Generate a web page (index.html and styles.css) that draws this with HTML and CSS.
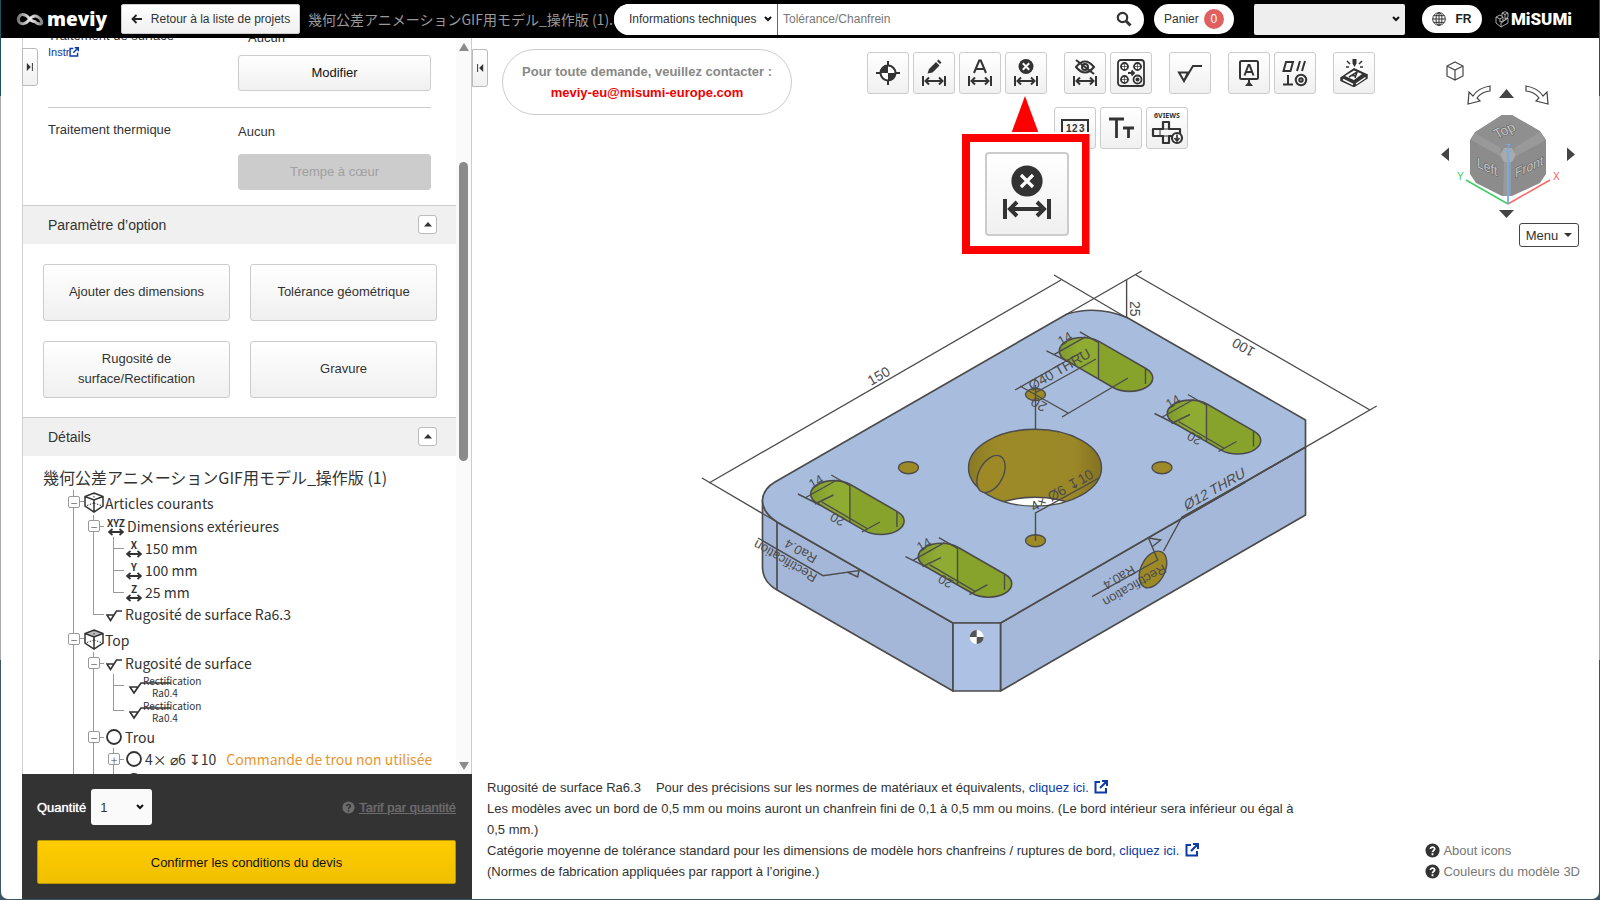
FILE: index.html
```html
<!DOCTYPE html>
<html lang="fr">
<head>
<meta charset="utf-8">
<title>meviy</title>
<link rel="stylesheet" href="styles.css">
</head>
<body>
<svg class="defs" aria-hidden="true">
  <defs>
    <linearGradient id="gGreen" x1="0" x2="1" y1="0" y2="0"><stop offset="0" stop-color="#7f9a2c"/><stop offset=".2" stop-color="#8fab33"/><stop offset=".42" stop-color="#8fab30"/><stop offset=".43" stop-color="#87a32c"/><stop offset="1" stop-color="#87a32c"/></linearGradient>
    <linearGradient id="gGold" x1="0" x2="1" y1="0" y2="0"><stop offset="0" stop-color="#8a7a26"/><stop offset=".2" stop-color="#9d8a27"/><stop offset=".8" stop-color="#9a8727"/><stop offset="1" stop-color="#847123"/></linearGradient>
    <linearGradient id="gLogo" x1="0" x2="1"><stop offset="0" stop-color="#777"/><stop offset=".5" stop-color="#eee"/><stop offset="1" stop-color="#888"/></linearGradient>
    <symbol id="slot" viewBox="-45 -30 120 80" overflow="visible">
      <path class="green" d="M16.4-9.5 63.4 17.6A23.2 13.4 0 0 1 30.6 36.6L-16.4 9.5A23.2 13.4 0 0 1 16.4-9.5Z"/>
      <path class="ln" d="M16-9.5V28M63 17.5V33M-2.6-19 16.4-8M-36 0-14 11M-29 4 3-14"/>
    </symbol>
    <symbol id="slotlen" viewBox="-45 -30 120 80" overflow="visible">
      <path class="ln" d="M-19 10-.5 1M-12 8 34 35M28 38 46 28"/>
    </symbol>
    <symbol id="arrows" viewBox="0 0 24 10"><path d="M1 0V10M23 0V10M3 5H21M7 1.500 3.500 5 7 8.500M17 1.500 20.500 5 17 8.500" fill="none" stroke="#333" stroke-width="2"/></symbol>
    <symbol id="ext" viewBox="0 0 14 14"><path d="M6 2H1.500V12.500H12V8M8 1H13V6M13 1 6 8" fill="none" stroke="currentColor" stroke-width="2"/></symbol>
    <symbol id="dbl" viewBox="0 0 16 8"><path d="M1 4H15M4.500 1 1 4 4.500 7M11.500 1 15 4 11.500 7" fill="none" stroke="#333" stroke-width="1.800"/></symbol>
    <symbol id="rough" viewBox="0 0 16 12"><path d="M1 5H8L4.500 10.500ZM4.500 10.500 10.500 1H16" fill="none" stroke="#333" stroke-width="1.600"/></symbol>
    <symbol id="help" viewBox="0 0 16 16"><circle cx="8" cy="8" r="7.500" fill="currentColor"/><path d="M5.800 6.500C5.800 3.600 10.400 3.800 10.300 6.400 10.200 8 8 7.900 8 9.800M8 11V13" fill="none" stroke="var(--q)" stroke-width="1.900"/></symbol>
    <symbol id="cube" viewBox="0 0 20 21"><path d="M10 1 19 4.500V14L10 20 1 14V4.500ZM1 4.500 10 8 19 4.500M10 8V20" fill="none" stroke="#333" stroke-width="1.500"/><path d="M10 1V11M10 11 1.500 14M10 11 18.500 14" fill="none" stroke="#333" stroke-width="1" stroke-dasharray="1.500 1.500"/></symbol>
    <symbol id="ring" viewBox="0 0 16 16"><circle cx="8" cy="8" r="7" fill="none" stroke="#333" stroke-width="1.800"/></symbol>
  </defs>
</svg>
<div class="window">
  <header class="topbar">
    <div class="logo">
      <svg width="29" height="18" viewBox="0 0 29 18"><path d="M20 11C15 14 13 6 9 5 4 3 1 8 3 12 5 15 10 14 13 10 16 6 19 5 22 7 26 9 27 14 24 14 22 14 20 13 18 11" fill="none" stroke="url(#gLogo)" stroke-width="3"/></svg>
      <span>meviy</span>
    </div>
    <button class="back" type="button"><svg width="11" height="10" viewBox="0 0 11 10"><path d="M11 5H1.500M5.500 1 1.500 5 5.500 9" fill="none" stroke="#222" stroke-width="1.800"/></svg>Retour à la liste de projets</button>
    <div class="fname">幾何公差アニメーションGIF用モデル_操作版 (1).</div>
    <form class="search">
      <select aria-label="Catégorie"><option>Informations techniques</option></select>
      <input type="text" aria-label="Recherche" placeholder="Tolérance/Chanfrein">
      <button type="button" aria-label="Rechercher"><svg width="16" height="16" viewBox="0 0 16 16"><circle cx="6.500" cy="6.500" r="4.700" fill="none" stroke="#333" stroke-width="2.200"/><path d="M10 10 14.500 14.500" stroke="#333" stroke-width="3"/></svg></button>
    </form>
    <button class="cart" type="button">Panier <b>0</b></button>
    <select class="account" aria-label="Compte"><option></option></select>
    <button class="lang" type="button"><svg width="14" height="14" viewBox="0 0 14 14"><g fill="none" stroke="#333"><circle cx="7" cy="7" r="6.300"/><ellipse cx="7" cy="7" rx="3" ry="6.300"/><path d="M7 .7V13.300M.7 7H13.300M1.700 3.700H12.300M1.700 10.300H12.300"/></g></svg>FR</button>
    <div class="misumi"><svg width="14" height="17" viewBox="0 0 14 17"><path d="M1 6 5 4 8 6V10L13 7V12L6 16 1 12ZM1 6 5 8 8 6M5 8V11L8 10M6 16V12L13 7M7 5V2L10 .7 13 2V6L10 8M7 2 10 3.500 13 2M10 3.500V8" fill="none" stroke="#bbb" stroke-width=".9"/></svg><span>MiSUMi</span></div>
  </header>
  <div class="work">
    <aside class="side">
      <button class="tab tab-left" type="button" aria-label="Déplier"><svg width="8" height="8" viewBox="0 0 8 10"><path d="M0 0 5 5 0 10Z" fill="#333"/><path d="M7 0V10" stroke="#333" stroke-width="1.200"/></svg></button>
      <div class="scroller">
        <div class="content">
          <section class="prop first">
            <div><div class="lab">Traitement de surface</div><a class="instr" href="#">Instr<svg width="10" height="10"><use href="#ext"/></svg></a></div>
            <div><div class="val indent">Aucun</div><button class="btn" type="button">Modifier</button></div>
          </section>
          <section class="prop">
            <div class="lab">Traitement thermique</div>
            <div><div class="val">Aucun</div><button class="btn off" type="button" disabled>Trempe à cœur</button></div>
          </section>
          <h2 class="head">Paramètre d’option<button type="button" aria-label="Replier"><svg width="8" height="5"><path d="M0 4.500 4 0 8 4.500Z" fill="#333"/></svg></button></h2>
          <div class="opts">
            <button class="btn" type="button">Ajouter des dimensions</button>
            <button class="btn" type="button">Tolérance géométrique</button>
            <button class="btn" type="button">Rugosité de surface/Rectification</button>
            <button class="btn" type="button">Gravure</button>
          </div>
          <h2 class="head">Détails<button type="button" aria-label="Replier"><svg width="8" height="5"><path d="M0 4.500 4 0 8 4.500Z" fill="#333"/></svg></button></h2>
          <div class="details">
            <div class="model">幾何公差アニメーションGIF用モデル_操作版 (1)</div>
            <ul class="tree">
              <li>
                <div class="row r1"><button class="tg" type="button">−</button><svg class="c" width="20" height="21"><use href="#cube"/></svg>Articles courants</div>
                <ul>
                  <li>
                    <div class="row"><button class="tg" type="button">−</button><span class="ax wide">XYZ<svg width="16" height="8"><use href="#dbl"/></svg></span>Dimensions extérieures</div>
                    <ul>
                      <li><div class="row"><span class="ax">X<svg width="16" height="8"><use href="#dbl"/></svg></span>150 mm</div></li>
                      <li><div class="row"><span class="ax">Y<svg width="16" height="8"><use href="#dbl"/></svg></span>100 mm</div></li>
                      <li><div class="row"><span class="ax">Z<svg width="16" height="8"><use href="#dbl"/></svg></span>25 mm</div></li>
                    </ul>
                  </li>
                  <li><div class="row"><svg class="i low" width="16" height="12"><use href="#rough"/></svg>Rugosité de surface Ra6.3</div></li>
                </ul>
              </li>
              <li class="gap">
                <div class="row r1"><button class="tg" type="button">−</button><svg class="c" width="20" height="21"><path d="M10 1 19 4.500 10 8 1 4.500Z" fill="#bbb"/><use href="#cube"/></svg>Top</div>
                <ul>
                  <li>
                    <div class="row"><button class="tg" type="button">−</button><svg class="i low" width="16" height="12"><use href="#rough"/></svg>Rugosité de surface</div>
                    <ul class="recs">
                      <li><div class="row rec"><svg width="42" height="14" viewBox="0 0 42 14"><path d="M1 6H9L5 12ZM5 12 12 2H42" fill="none" stroke="#333" stroke-width="1.600"/></svg><span>Rectification<br><i>Ra0.4</i></span></div></li>
                      <li><div class="row rec"><svg width="42" height="14" viewBox="0 0 42 14"><path d="M1 6H9L5 12ZM5 12 12 2H42" fill="none" stroke="#333" stroke-width="1.600"/></svg><span>Rectification<br><i>Ra0.4</i></span></div></li>
                    </ul>
                  </li>
                  <li>
                    <div class="row"><button class="tg" type="button">−</button><svg class="i" width="16" height="16"><use href="#ring"/></svg>Trou</div>
                    <ul>
                      <li><div class="row"><button class="tg" type="button">+</button><svg class="i" width="16" height="16"><use href="#ring"/></svg>4× ⌀6 ↧10<em>Commande de trou non utilisée</em></div></li>
                      <li><div class="row"><button class="tg" type="button">+</button><svg class="i" width="16" height="16"><use href="#ring"/></svg></div></li>
                    </ul>
                  </li>
                  <li><div class="row"></div></li>
                </ul>
              </li>
              <li><div class="row"></div></li>
            </ul>
          </div>
        </div>
        <div class="bar"><svg width="10" height="8"><path d="M0 8 5 0 10 8Z" fill="#8b8b8b"/></svg><div class="track"><div class="thumb"></div></div><svg width="10" height="8"><path d="M0 0 5 8 10 0Z" fill="#8b8b8b"/></svg></div>
      </div>
      <div class="foot">
        <div class="qty"><label for="q">Quantité</label><select id="q"><option>1</option></select><a class="tarif" href="#"><svg width="13" height="13"><use href="#help"/></svg><span>Tarif par quantité</span></a></div>
        <button class="confirm" type="button">Confirmer les conditions du devis</button>
      </div>
    </aside>
    <main class="view">
      <div class="upper">
        <button class="tab tab-right" type="button" aria-label="Replier"><svg width="8" height="8" viewBox="0 0 8 10"><path d="M8 0 3 5 8 10Z" fill="#333"/><path d="M1 0V10" stroke="#333" stroke-width="1.200"/></svg></button>
        <div class="contact">Pour toute demande, veuillez contacter :<br><a href="#">meviy-eu@misumi-europe.com</a></div>
        <div class="tools">
          <div class="grp">
            <button type="button" aria-label="Origine"><svg width="28" height="28" viewBox="0 0 28 28"><path d="M14 2V26M2 14H26" stroke="#333" stroke-width="2"/><circle cx="14" cy="14" r="7.500" fill="#fff" stroke="#333" stroke-width="2"/><path d="M14 14V6A8 8 0 0 0 6 14ZM14 14V22A8 8 0 0 0 22 14Z" fill="#333"/></svg></button>
            <button type="button" aria-label="Modifier cote"><svg width="28" height="28" viewBox="0 0 28 28"><path d="M7.500 14.500 9 10 16 3 19.500 6.500 12.500 13.500ZM17 2 18.500.5 21.500 3.500 20 5Z" fill="#333"/><use href="#arrows" x="2" y="17" width="24" height="10"/></svg></button>
            <button type="button" aria-label="Texte cote"><svg width="28" height="28" viewBox="0 0 28 28"><path d="M8 14 13.200 1.500H14.800L20 14M10 10H18" fill="none" stroke="#333" stroke-width="2"/><use href="#arrows" x="2" y="17" width="24" height="10"/></svg></button>
            <div class="marked">
              <button type="button" aria-label="Supprimer cote"><svg width="28" height="28" viewBox="0 0 28 28"><circle cx="14" cy="7.500" r="7.500" fill="#333"/><path d="M10.800 4.300 17.200 10.700M17.200 4.300 10.800 10.700" stroke="#fff" stroke-width="2"/><use href="#arrows" x="2" y="17" width="24" height="10"/></svg></button>
              <div class="callout">
                <svg class="point" width="28" height="38" viewBox="0 0 28 38"><path d="M14 0 28 38H0Z" fill="#f00"/></svg>
                <div class="frame"><span class="big"><svg width="56" height="60" viewBox="0 0 28 30"><circle cx="14" cy="8.500" r="7.800" fill="#333"/><path d="M11 5.500 17 11.500M17 5.500 11 11.500" stroke="#fff" stroke-width="1.600"/><use href="#arrows" x="2" y="17.500" width="24" height="10"/></svg></span></div>
              </div>
            </div>
          </div>
          <div class="grp">
            <button type="button" aria-label="Masquer cote"><svg width="28" height="28" viewBox="0 0 28 28"><g fill="none" stroke="#333" stroke-width="2"><path d="M5 8Q14-3 23 8 14 19 5 8Z"/><circle cx="14" cy="8" r="3"/><path d="M5 1 23 15"/></g><use href="#arrows" x="2" y="17" width="24" height="10"/></svg></button>
            <button type="button" aria-label="Trous"><svg width="28" height="28" viewBox="0 0 28 28"><g fill="none" stroke="#333" stroke-width="1.800"><rect x="1" y="1" width="26" height="26" rx="3"/><circle cx="7.500" cy="7.500" r="3.500"/><circle cx="20.500" cy="7.500" r="3.500"/><circle cx="7.500" cy="20.500" r="3.500"/><circle cx="20.500" cy="20.500" r="4"/><path d="M11 14H17M14.500 11.500 17 14 14.500 16.500"/><path d="M3 7.500H12M16 7.500H25M3 20.500H12M7.500 3V12M20.500 3V12M7.500 16V25" stroke-width=".7"/></g><circle cx="20.500" cy="20.500" r="2" fill="#333"/></svg></button>
          </div>
          <div class="grp">
            <button type="button" aria-label="Rugosité"><svg width="28" height="28" viewBox="0 0 28 28"><path d="M3 13.500H12L8 22ZM8 22 17 7H26" fill="none" stroke="#333" stroke-width="2"/></svg></button>
          </div>
          <div class="grp">
            <button type="button" aria-label="Référence"><svg width="28" height="28" viewBox="0 0 28 28"><g fill="none" stroke="#333" stroke-width="2"><rect x="5" y="2" width="18" height="18" rx="1.500"/><path d="M9.500 16.500 13.500 6H14.500L18.500 16.500M11 13H17M14 20V26" /></g><path d="M14 22 18 27H10Z" fill="#333"/></svg></button>
            <button type="button" aria-label="Tolérance géométrique"><svg width="28" height="28" viewBox="0 0 28 28"><g fill="none" stroke="#333" stroke-width="2"><path d="M5 3H12L9.500 12H2.500ZM16 12 19 2M21 12 24 2M7 16V25.500M2 25.500H12"/><circle cx="20" cy="21" r="5.200"/><circle cx="20" cy="21" r="1.700"/></g></svg></button>
          </div>
          <div class="grp">
            <button type="button" aria-label="Gravure"><svg width="28" height="28" viewBox="0 0 28 28"><path d="M12.500 0H16.500V4.500L14.500 8 12.500 4.500ZM1 18 14 9 27 15 14 25Z" fill="#333"/><path d="M1 18V21.500L14 27.500 27 19V15" fill="#333" stroke="#333" stroke-width="1.500"/><path d="M5 17 14 11.500 22 15 14 21Z" fill="#fff"/><path d="M3 20.500 13 25.500M16 25 25.500 18.500" stroke="#fff" stroke-width="1.500"/><path d="M9 18 17 13 15 19M12 16.500 16 17" fill="none" stroke="#333" stroke-width="1.600"/><path d="M7 2 10 5M22 2 19 5M6 8H9M20 8H23" stroke="#333" stroke-width="1.500"/></svg></button>
          </div>
          <div class="grp">
            <button type="button" aria-label="Valeurs"><svg width="28" height="28" viewBox="0 0 28 28"><rect x="1" y="6" width="26" height="18" fill="none" stroke="#333" stroke-width="2"/><text x="5" y="18" class="ic123">1</text><text x="11" y="18" class="ic123">2</text><text x="18" y="18" class="ic123">3</text></svg></button>
            <button type="button" aria-label="Taille du texte"><svg width="28" height="28" viewBox="0 0 28 28"><path d="M2 5H17M9.500 5V24M16 14H27M21.500 14V24" fill="none" stroke="#333" stroke-width="2.800"/></svg></button>
            <button type="button" aria-label="6 vues"><svg width="34" height="36" viewBox="0 0 34 36"><text x="17" y="8" class="ic6">6VIEWS</text><g fill="none" stroke="#333" stroke-width="2.200"><path d="M13 12H19V19H30V26H19V33H13V26H3V19H13Z" stroke-linejoin="round"/><path d="M10 19V26M13 19H19M13 26H19" stroke-width="1"/><circle cx="27" cy="28" r="5" fill="#fff"/></g><path d="M27 24.500V30M24.500 28 27 31 29.500 28" fill="none" stroke="#333" stroke-width="1.700"/></svg></button>
          </div>
        </div>
        <div class="nav">
          <svg width="150" height="164" viewBox="1438 58 150 164">
            <g fill="none" stroke="#444" stroke-width="1.200"><path d="M1455 62 1463 66V76L1455 80 1447 76V66ZM1447 66 1455 70 1463 66M1455 70V80"/>
            <path d="M1490 86Q1478 88 1473 96L1469 92 1468 104 1480 101 1477 98Q1481 92 1490 91ZM1526 86Q1538 88 1543 96L1547 92 1548 104 1536 101 1539 98Q1535 92 1526 91Z"/></g>
            <path d="M1499 98 1506.500 89 1514 98ZM1499 210 1506.500 218 1514 210ZM1449 147.500 1441 154.500 1449 161ZM1567 147.500 1575 154.500 1567 161Z" fill="#444"/>
            <path d="M1502 115H1512L1540 131 1546 140V174L1540 183 1512 196H1502L1476 183 1470 174V140L1475 132Z" fill="#8c8c8c"/>
            <path d="M1502 115H1512L1540 132 1514 148H1501L1475 133Z" fill="#8f8f8f"/>
            <path d="M1475 133 1501 148 1500 156 1471 140ZM1540 132 1546 140 1516 156 1514 148ZM1504 162H1511V196H1503Z" fill="#999"/>
            <path d="M1504 148H1512L1516 155 1512 162H1504L1500 155Z" fill="#a9a9a9"/>
            <g class="face"><text transform="matrix(.87 -.4 .5 .87 1497 139)">Top</text><text transform="matrix(.87 .4 0 1 1477 167)">Left</text><text transform="matrix(.87 -.4 0 1 1515 178)">Front</text></g>
            <path d="M1508 204 1466 180" stroke="#45cc66" stroke-width="1.500"/><path d="M1508 204 1550 180" stroke="#f66" stroke-width="1.500"/><path d="M1508 204V152" stroke="#6faeee" stroke-width="1.800"/>
            <text class="axis" x="1457" y="180" fill="#3c6">Y</text><text class="axis" x="1553" y="180" fill="#f55">X</text><text class="axis" x="1505" y="152" fill="#6faeee">Z</text>
          </svg>
          <button class="menu" type="button">Menu<svg width="8" height="4"><path d="M0 0H8L4 4Z" fill="#333"/></svg></button>
        </div>
      </div>
      <svg class="part" viewBox="472 262 1127 446" preserveAspectRatio="xMidYMin meet" role="img" aria-label="Modèle 3D">
        <g stroke="#4c4c4c" stroke-width="1.700" stroke-linejoin="round">
          <path fill="#a5b7d8" d="M762.500 500V568Q763 582 777 590L953 691V623L777 522Z"/>
          <path fill="#a5b8da" d="M1000.500 623V691L1305.500 515V447Z"/>
          <path fill="#a8bddd" d="M1305.500 420V447L1000.500 623H953L777 522Q762 512 762.500 500 763 489 775 482L1067 314Q1096 305 1127 317.500Z"/>
          <path fill="#adc1e4" d="M953 623H1000.500V691H953Z"/>
          <path fill="none" d="M777 522V590"/>
        </g>
        <clipPath id="bore"><ellipse cx="1035" cy="467.700" rx="66.500" ry="38.400"/></clipPath>
        <ellipse cx="1035" cy="467.700" rx="66.500" ry="38.400" fill="url(#gGold)"/>
        <g clip-path="url(#bore)"><ellipse cx="1035" cy="535.700" rx="66.500" ry="38.400" fill="#fff" stroke="#4c4c4c" stroke-width="1.500"/></g>
        <g class="ln gold"><ellipse cx="1035" cy="467.700" rx="66.500" ry="38.400" fill="none"/><ellipse cx="991" cy="474" rx="12" ry="20" transform="rotate(28 991 474)"/>
        <ellipse cx="1035.500" cy="394.500" rx="10" ry="6"/><ellipse cx="908.500" cy="467.700" rx="10" ry="6"/><ellipse cx="1162" cy="467.700" rx="10" ry="6"/><ellipse cx="1035.500" cy="540.700" rx="10" ry="6"/><ellipse cx="1153" cy="569.500" rx="12" ry="19.500" transform="rotate(26 1153 569.500)"/></g>
        <g>
          <use href="#slot" x="1037.500" y="320.900" width="120" height="80"/>
          <use href="#slot" x="1145.500" y="383.500" width="120" height="80"/><use href="#slotlen" x="1145.500" y="383.500" width="120" height="80"/>
          <use href="#slot" x="788.900" y="464" width="120" height="80"/><use href="#slotlen" x="788.900" y="464" width="120" height="80"/>
          <use href="#slot" x="896.500" y="526.700" width="120" height="80"/><use href="#slotlen" x="896.500" y="526.700" width="120" height="80"/>
        </g>
        <path class="ln" d="M702 478 777 522M709 483 1061 280M1054 275 1127 318M1136 275 1370 410M1141.700 271 1067 314M1376.700 406 1245 482M1126.600 280V317M1020 386 1068 413M1062 417 1128 378M1035 393 1096 359M1015 390 1082 352M1035.500 385V430M1035.500 541V513L1099 478M758 538 823 575.700 859 570.500 857.700 577 847 572M1163.500 551 1182 517 1245 482M1148.500 538 1160.700 540 1152.300 546.700M1148.500 538 1157.700 560 1092 596.700"/>
        <path d="M1182 518 1245 482" stroke="#4c4c4c" stroke-width="2.500"/>
        <g class="dim">
          <text transform="translate(871 386) rotate(-30)">150</text>
          <text transform="translate(1256 349) rotate(210)">100</text>
          <text transform="translate(1130 301) rotate(90)">25</text>
          <text transform="translate(1032 391) rotate(-30)">Ø40 THRU</text>
          <text transform="translate(1048 404) rotate(210)">20</text>
          <text transform="translate(1034 512) rotate(-30)">4× Ø6 ↧10</text>
          <text transform="translate(1186 511) rotate(-30) skewX(-15)">Ø12 THRU</text>
          <g class="fine">
            <text transform="translate(1163 564) rotate(150)">Rectification</text>
            <text transform="translate(1132 565) rotate(150)">Ra0.4</text>
            <text transform="translate(818 575) rotate(210)">Rectification</text>
            <text transform="translate(818 556) rotate(210)">Ra0.4</text>
            <text transform="translate(1061 346) rotate(-30)">14</text><text transform="translate(1169 409) rotate(-30)">14</text><text transform="translate(812 489) rotate(-30)">14</text><text transform="translate(920 552) rotate(-30)">14</text>
            <text transform="translate(1203 438) rotate(210)">20</text><text transform="translate(846 519) rotate(210)">20</text><text transform="translate(954 581) rotate(210)">20</text>
          </g>
        </g>
        <circle cx="976.700" cy="637" r="7" fill="#fff"/><path d="M976.700 637V630A7 7 0 0 0 969.700 637ZM976.700 637V644A7 7 0 0 0 983.700 637Z" fill="#555"/>
      </svg>
      <div class="lower">
        <div class="notes">
          <p><span class="ra">Rugosité de surface Ra6.3</span>Pour des précisions sur les normes de matériaux et équivalents, <a href="#">cliquez ici. <svg width="14" height="14"><use href="#ext"/></svg></a></p>
          <p>Les modèles avec un bord de 0,5 mm ou moins auront un chanfrein fini de 0,1 à 0,5 mm ou moins. (Le bord intérieur sera inférieur ou égal à 0,5 mm.)</p>
          <p>Catégorie moyenne de tolérance standard pour les dimensions de modèle hors chanfreins / ruptures de bord, <a href="#">cliquez ici. <svg width="14" height="14"><use href="#ext"/></svg></a></p>
          <p>(Normes de fabrication appliquées par rapport à l’origine.)</p>
        </div>
        <div class="about"><a href="#"><svg width="15" height="15"><use href="#help"/></svg>About icons</a><a href="#"><svg width="15" height="15"><use href="#help"/></svg>Couleurs du modèle 3D</a></div>
      </div>
    </main>
  </div>
</div>
</body>
</html>
```
FILE: styles.css
```css
* { box-sizing: border-box; }
html, body { height: 100%; margin: 0; }
body { background: linear-gradient(#1f5262 0 96px, #a9a9ad 96px 660px, #3c5663 660px); font-family: "Liberation Sans", Arial, sans-serif; font-size: 13px; color: #333; padding: 0 1px 1px; overflow: hidden; }
button, select, input { font: inherit; color: inherit; margin: 0; }
button { padding: 0; }
a { color: #0b3ba7; text-decoration: none; }
svg { flex: none; }
.defs { position: absolute; width: 0; height: 0; }
.window { height: 100%; display: flex; flex-direction: column; background: #fff; border-radius: 0 0 7px 7px; overflow: hidden; }

.topbar { flex: none; height: 38px; background: #000; display: flex; align-items: center; padding: 0 27px 0 15px; white-space: nowrap; }
.logo { flex: none; display: flex; align-items: center; gap: 2px; width: 105px; color: #fff; font: 800 19px/28px "Open Sans", sans-serif; }
.back { flex: none; height: 30px; width: 179px; border: 1px solid #ccc; border-radius: 2px; background: linear-gradient(#fff, #f0f0f0); display: flex; align-items: center; justify-content: center; gap: 9px; font-size: 12px; }
.fname { flex: none; width: 314px; padding-left: 8px; color: #999; font: 14px/30px "Noto Sans CJK JP", sans-serif; overflow: hidden; }
.search { flex: 1; height: 31px; display: flex; background: #fff; border-radius: 16px; overflow: hidden; }
select { appearance: none; border: 0; border-radius: 0; background: #fff url("data:image/svg+xml,%3Csvg xmlns='http://www.w3.org/2000/svg' width='8' height='6'%3E%3Cpath d='M1 1 4 4 7 1' fill='none' stroke='%23111' stroke-width='2'/%3E%3C/svg%3E") no-repeat right 5px center; }
.search select { width: 164px; padding-left: 15px; border-right: 1px solid #666; font-size: 12px; }
.search input { flex: 1; min-width: 0; border: 0; padding: 0 5px; font-size: 12px; outline: 0; }
.search input::placeholder { color: #777; opacity: 1; }
.search button { width: 40px; border: 0; background: none; padding-top: 2px; }
.cart { width: 80px; height: 30px; margin-left: 10px; border: 0; border-radius: 15px; background: #fff; display: flex; align-items: center; justify-content: center; gap: 5px; font-size: 12px; }
.cart b { width: 20px; height: 20px; border-radius: 10px; background: #e06060; color: #fff; font-weight: 400; line-height: 20px; }
.account { width: 151px; height: 31px; margin-left: 20px; background-color: #eee; border-radius: 2px; }
.lang { width: 60px; height: 28px; margin-left: 17px; border: 0; border-radius: 14px; background: #fff; display: flex; align-items: center; justify-content: center; gap: 9px; font-size: 12px; font-weight: 700; color: #222; }
.misumi { display: flex; align-items: center; gap: 2px; margin-left: 13px; color: #fff; font: 900 17px/20px Roboto, sans-serif; }

.work { flex: 1; min-height: 0; display: flex; }
.side { flex: none; width: 450px; margin-left: 21px; border-left: 1px solid #d0d0d0; border-right: 1px solid #ccc; display: flex; flex-direction: column; position: relative; }
.tab { position: absolute; width: 16px; height: 38px; border: 1px solid #bbb; border-radius: 0 3px 3px 0; background: linear-gradient(#fff, #f0f0f0); display: grid; place-items: center; z-index: 1; }
.tab-left { left: -1px; top: 10px; }
.tab-right { left: 0; top: 11px; }
.scroller { flex: 1; min-height: 0; display: flex; overflow: hidden; }
.content { flex: 1; min-width: 0; }
.bar { flex: none; width: 15px; background: #fafafa; display: flex; flex-direction: column; align-items: center; padding: 5px 0 4px; }
.track { flex: 1; width: 9px; padding-top: 111px; }
.thumb { height: 299px; border-radius: 5px; background: #8b8b8b; }
.prop { display: grid; grid-template-columns: 190px 1fr; padding: 12px 0 15px; margin: 0 25px; line-height: 20px; }
.prop .val { padding-top: 2px; height: 34px; }
.prop.first { padding: 0 0 16px; margin-top: -12px; border-bottom: 1px solid #ccc; }
.prop.first .val { height: 29px; }
.prop .indent { padding-left: 10px; }
.instr { display: flex; align-items: center; font-size: 11px; line-height: 12px; }
.btn { border: 1px solid #ccc; border-radius: 3px; background: linear-gradient(#fff, #f0f0f0); line-height: 20px; }
.prop .btn { width: 100%; height: 36px; color: #111; display: block; }
.prop .off { background: #ccc; color: #a0a0a0; }
.head { margin: 0; height: 39px; border-top: 1px solid #ccc; background: #f0f0f0; padding: 0 19px 1px 25px; display: flex; align-items: center; justify-content: space-between; font-size: 14px; font-weight: 400; }
.head button { width: 19px; height: 19px; border: 1px solid #bbb; border-radius: 3px; background: #fff; display: grid; place-items: center; }
.opts { display: grid; grid-template-columns: 1fr 1fr; gap: 20px; padding: 20px 19px 19px 20px; }
.opts .btn { height: 57px; padding: 0 20px 2px; }
.details { padding-left: 20px; font-family: "Noto Sans CJK JP", "Noto Sans", sans-serif; font-size: 14px; white-space: nowrap; }
.model { font-size: 16px; line-height: 24px; padding-top: 9px; }
.tree, .tree ul { list-style: none; margin: 0; padding: 0; }
.tree { padding: 1px 0 0 25px; }
.tree ul { padding-left: 20px; }
.tree .recs { padding-bottom: 2px; }
.tree li { position: relative; }
.tree li::before { content: ""; position: absolute; left: 5px; top: 0; bottom: 0; width: 1px; background: #999; }
.tree li:last-child::before { bottom: auto; height: 11px; }
.tree .gap { padding-top: 2px; }
.row { position: relative; height: 22px; line-height: 22px; display: flex; align-items: center; padding-left: 18px; }
.row::before { content: ""; position: absolute; left: 5px; top: 11px; width: 11px; height: 1px; background: #999; }
.r1 { height: 25px; padding-left: 16px; }
.row .i { margin-right: 3px; }
.row .low { margin-top: 3px; }
.row .c { margin-right: 1px; }
.row em { font-style: normal; color: #e9962f; margin-left: 10px; }
.tg { position: absolute; left: 0; top: 5px; width: 12px; height: 12px; border: 1px solid #999; border-radius: 2px; background: #fff; color: #777; font-size: 12px; line-height: 9px; }
.r1 .tg { top: 6px; }
.ax { width: 16px; margin-right: 3px; display: flex; flex-direction: column; align-items: center; font-size: 10px; line-height: 11px; font-weight: 700; }
.wide { width: 20px; margin-right: 1px; }
.rec { height: 25px; font-size: 10px; line-height: 12px; padding-left: 21px; }
.rec svg { margin-top: 3px; }
.rec span { margin-left: -28px; }
.rec i { font-style: normal; padding-left: 9px; }
.foot { flex: none; background: #333; padding: 15px 16px 15px 15px; margin: 0 -1px; height: 125px; }
.qty { display: flex; align-items: center; height: 36px; color: #fff; gap: 5px; }
.qty label { text-shadow: 0 0 1px #fff; }
.qty select { width: 61px; height: 36px; padding-left: 9px; color: #333; border-radius: 3px; background-color: #fafafa; background-position: right 8px center; }
.tarif { --q: #333; margin-left: auto; color: #6b6b6b; display: flex; gap: 4px; align-items: center; text-shadow: 0 0 1px #6b6b6b; }
.tarif span { text-decoration: underline; }
.confirm { width: 100%; height: 44px; margin-top: 15px; border: 1px solid #b89600; border-radius: 2px; background: linear-gradient(#fc0, #f0c000); color: #111; }

.view { flex: 1; min-width: 0; display: flex; flex-direction: column; position: relative; }
.upper { display: flex; align-items: flex-start; padding-left: 30px; height: 224px; }
.contact { flex: none; width: 290px; height: 66px; margin-top: 11px; border: 1px solid #ccc; border-radius: 33px; text-align: center; font-weight: 700; line-height: 21px; padding-top: 11px; color: #888; }
.contact a { color: #f00000; }
.tools { flex: 1; display: flex; flex-wrap: wrap; justify-content: center; gap: 13px 17px; padding: 14px 52px 0 63px; }
.grp { display: flex; gap: 4px; }
.tools button { width: 42px; height: 42px; border: 1px solid #ccc; border-radius: 3px; background: linear-gradient(#fff, #f0f0f0); display: grid; place-items: center; }
.marked { position: relative; }
.callout { position: absolute; left: -43px; top: 44px; width: 128px; z-index: 2; }
.point { display: block; margin-left: 49px; }
.frame { height: 120px; border: 8px solid #f00; background: #fff; display: grid; place-items: center; padding-left: 3px; box-shadow: 0 -2px #fff; clip-path: inset(-2px 0 0); }
.big { width: 84px; height: 84px; border: 2px solid #ccc; border-radius: 4px; background: linear-gradient(#fff, #f0f0f0); display: grid; place-items: center; }
.ic123 { font: 700 10px "Liberation Sans", sans-serif; text-anchor: middle; fill: #333; }
.ic123 { text-anchor: start; }
.ic6 { font: 700 7px "Noto Sans", sans-serif; text-anchor: middle; fill: #333; }
.nav { flex: none; width: 150px; margin-right: 11px; padding-top: 20px; }
.nav > svg { display: block; }
.face { font: 14px "Liberation Sans", sans-serif; fill: #c4c4c4; stroke: #666; stroke-width: 1.2; paint-order: stroke; }
.axis { font: 10px "Liberation Sans", sans-serif; }
.menu { width: 60px; height: 24px; margin: 1px 9px 0 auto; border: 1px solid #444; border-radius: 3px; background: #fff; display: flex; align-items: center; justify-content: center; gap: 6px; }
.part { flex: 1; min-height: 0; width: 100%; display: block; }
.ln { fill: none; stroke: #4c4c4c; stroke-width: 1.4; }
.gold ellipse:not([fill]) { fill: #9d8a27; }
.green { fill: url(#gGreen); stroke: #4c4c4c; stroke-width: 1.6; }
.dim { font: 14px "Liberation Sans", sans-serif; fill: #4c4c4c; }
.fine { font-size: 13px; }
.lower { flex: none; display: flex; justify-content: space-between; align-items: flex-end; gap: 112px; padding: 0 19px 17px 15px; line-height: 21px; }
.notes p { margin: 0; }
.notes svg { vertical-align: -2px; margin-left: 2px; }
.ra { margin-right: 15px; }
.about { --q: #fff; flex: none; }
.about a { display: flex; align-items: center; gap: 3px; color: #777; }
.about svg { color: #333; }
```
